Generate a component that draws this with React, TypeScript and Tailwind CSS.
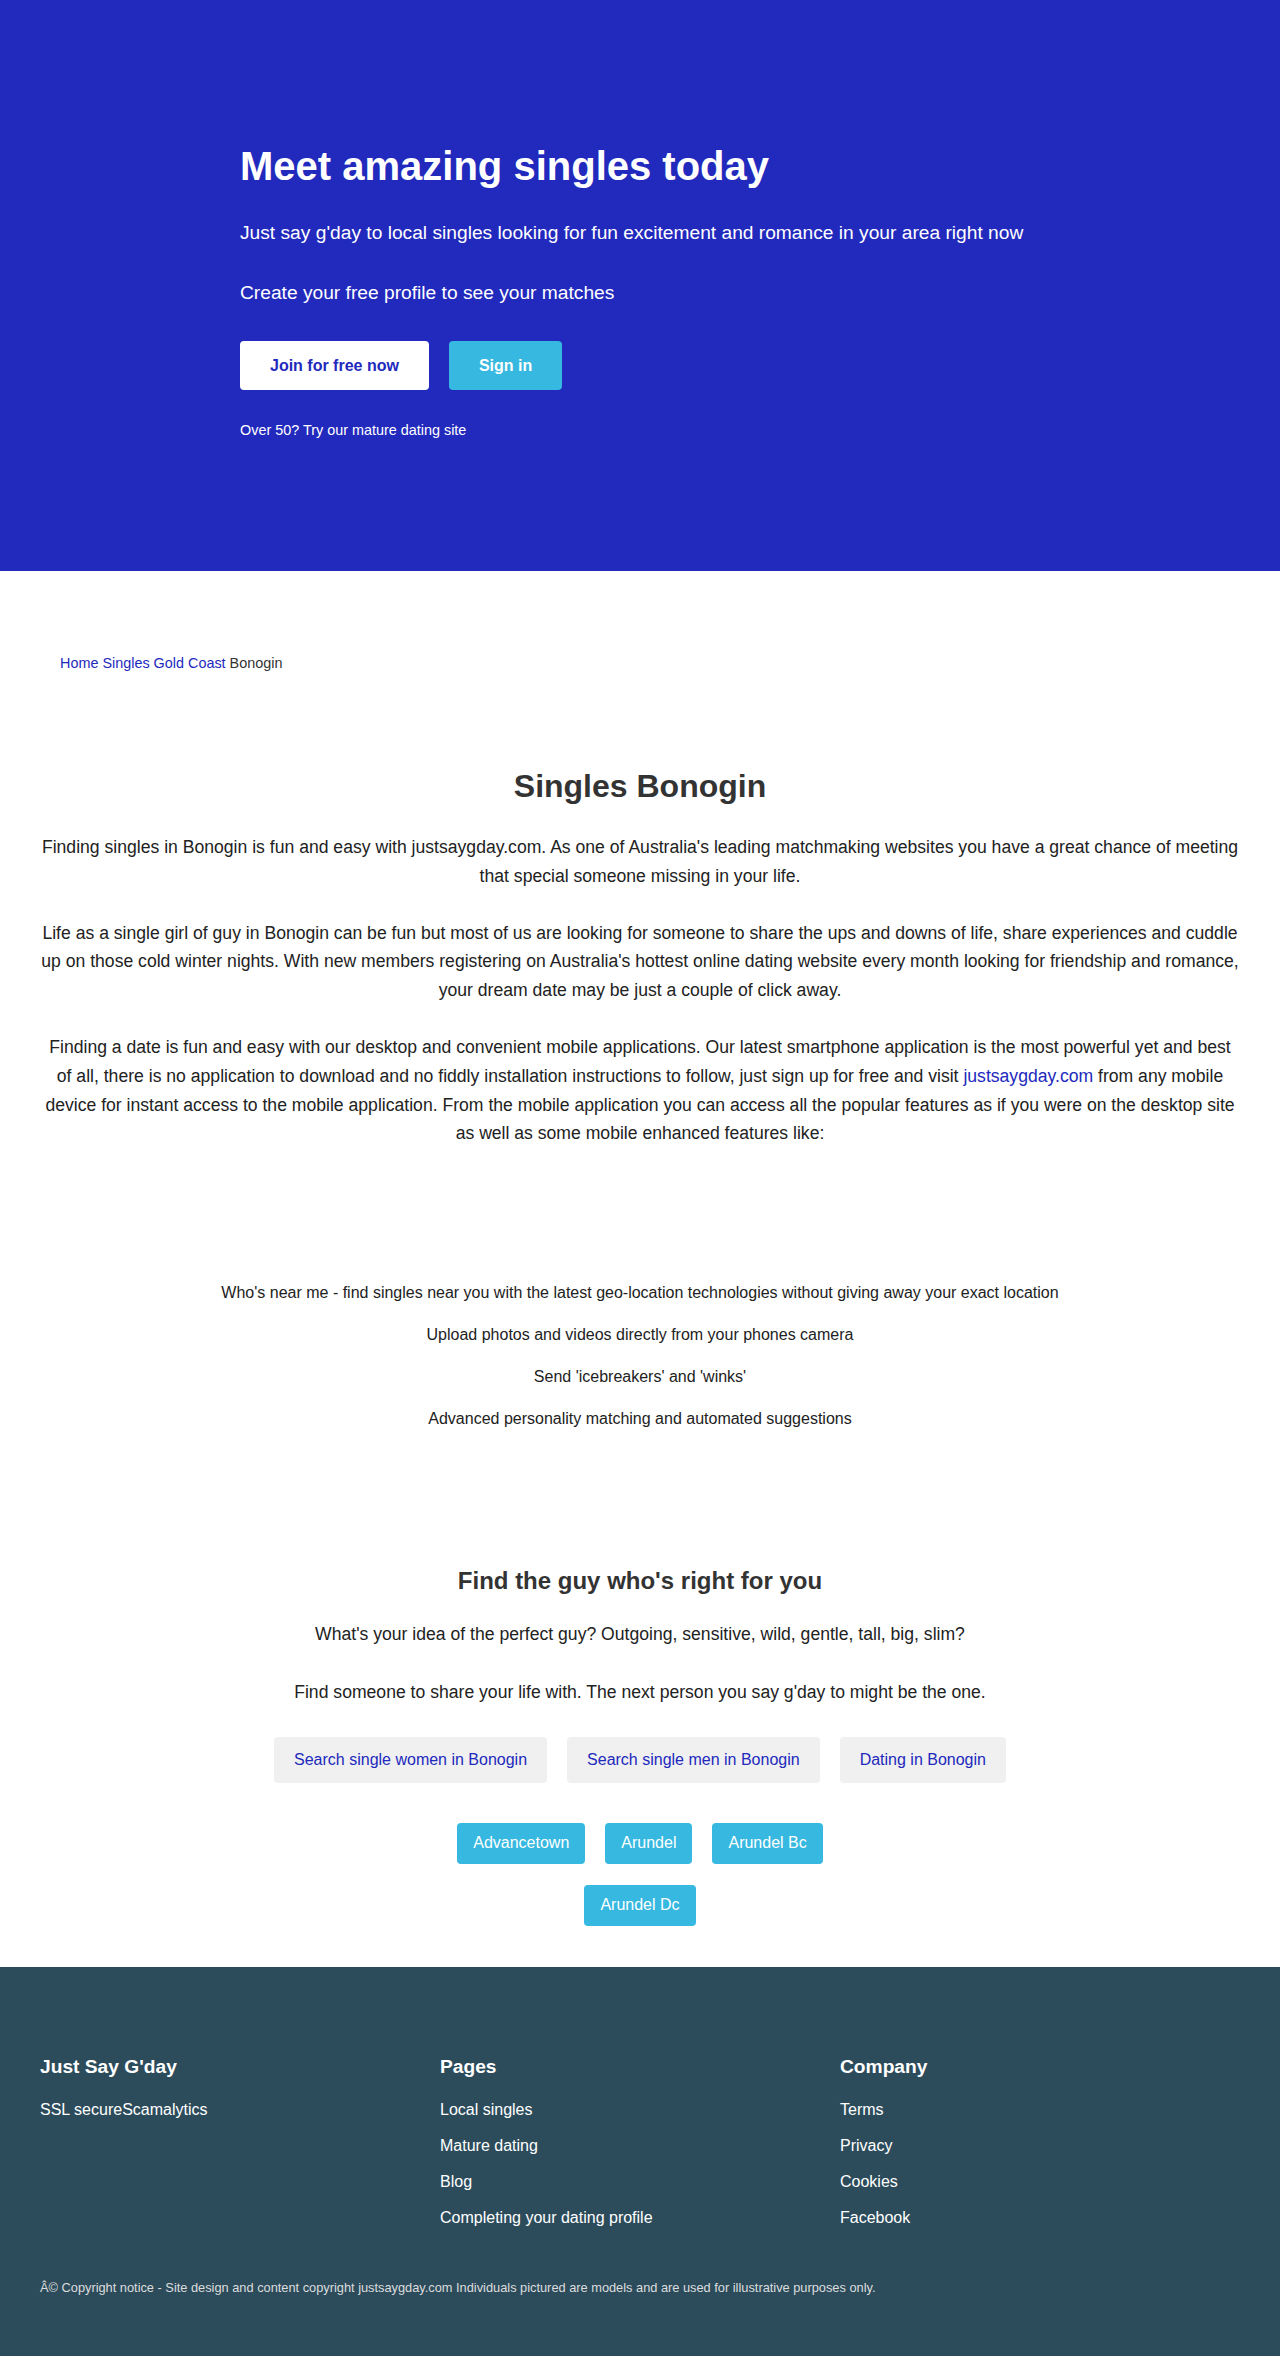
import React from "react";

const font = { fontFamily: '"Liberation Sans", Arial, Helvetica, sans-serif' };

export default function App() {
  const features = [
    "Who's near me - find singles near you with the latest geo-location technologies without giving away your exact location",
    "Upload photos and videos directly from your phones camera",
    "Send 'icebreakers' and 'winks'",
    "Advanced personality matching and automated suggestions",
  ];
  const towns = ["Advancetown", "Arundel", "Arundel Bc", "Arundel Dc"];
  return (
    <div style={font} className="w-[1280px] bg-white text-[#222]">
      {/* Hero */}
      <section className="h-[571px] bg-[#2229bd] text-white pt-[143px]">
        <div className="max-w-[800px] mx-auto">
          <h1 className="text-[40px] leading-[46px] font-bold">Meet amazing singles today</h1>
          <p className="mt-[30px] text-[19.2px] leading-[28px]">
            Just say g'day to local singles looking for fun excitement and romance in your area right now
          </p>
          <p className="mt-[32px] text-[19.2px] leading-[28px]">Create your free profile to see your matches</p>
          <div className="mt-[34px] flex gap-5">
            <a className="h-[49px] px-[30px] flex items-center rounded-[4px] bg-white text-[#2229bd] text-[16px] font-bold">
              Join for free now
            </a>
            <a className="h-[49px] px-[30px] flex items-center rounded-[4px] bg-[#36b8e0] text-white text-[16px] font-bold">
              Sign in
            </a>
          </div>
          <p className="mt-[30px] text-[14.4px] leading-[20px]">Over 50? Try our mature dating site</p>
        </div>
      </section>

      {/* Breadcrumb */}
      <nav className="px-[60px] pt-[80px] text-[14.4px] leading-[24px]">
        <a className="text-[#2229bd]">Home</a> <a className="text-[#2229bd]">Singles</a>{" "}
        <a className="text-[#2229bd]">Gold Coast</a> <span className="text-[#333]">Bonogin</span>
      </nav>

      {/* Intro */}
      <section className="px-10 pt-[92px] text-center">
        <h2 className="text-[32px] leading-[38px] font-bold text-[#333]">Singles Bonogin</h2>
        <div className="mt-[28px] flex flex-col gap-[28px] text-[17.6px] leading-[28.8px]">
          <p>
            Finding singles in Bonogin is fun and easy with justsaygday.com. As one of Australia's leading matchmaking
            websites you have a great chance of meeting that special someone missing in your life.
          </p>
          <p>
            Life as a single girl of guy in Bonogin can be fun but most of us are looking for someone to share the ups and
            downs of life, share experiences and cuddle up on those cold winter nights. With new members registering on
            Australia's hottest online dating website every month looking for friendship and romance, your dream date may
            be just a couple of click away.
          </p>
          <p>
            Finding a date is fun and easy with our desktop and convenient mobile applications. Our latest smartphone
            application is the most powerful yet and best of all, there is no application to download and no fiddly
            installation instructions to follow, just sign up for free and visit{" "}
            <a className="text-[#2229bd]">justsaygday.com</a> from any mobile device for instant access to the mobile
            application. From the mobile application you can access all the popular features as if you were on the
            desktop site as well as some mobile enhanced features like:
          </p>
        </div>
      </section>

      {/* Features */}
      <section className="px-10 pt-[132px] text-center">
        <ul className="flex flex-col gap-4 text-[16px] leading-[26px]">
          {features.map((f) => (
            <li key={f}>{f}</li>
          ))}
        </ul>
      </section>

      {/* Find the guy */}
      <section className="px-10 pt-[134px] pb-[41px] text-center">
        <h3 className="text-[24px] leading-[29px] font-bold text-[#333]">Find the guy who's right for you</h3>
        <div className="mt-[25px] flex flex-col gap-[29px] text-[17.6px] leading-[28.8px]">
          <p>What's your idea of the perfect guy? Outgoing, sensitive, wild, gentle, tall, big, slim?</p>
          <p>Find someone to share your life with. The next person you say g'day to might be the one.</p>
        </div>
        <div className="mt-[30px] flex justify-center gap-5">
          {["Search single women in Bonogin", "Search single men in Bonogin", "Dating in Bonogin"].map((t) => (
            <a
              key={t}
              className="h-[46px] px-5 flex items-center rounded-[4px] bg-[#f0f0f0] text-[#2229bd] text-[16px]"
            >
              {t}
            </a>
          ))}
        </div>
        <div className="mt-[40px] w-[440px] mx-auto flex flex-wrap justify-center gap-x-5 gap-y-[21px]">
          {towns.map((t) => (
            <a
              key={t}
              className="h-[41px] px-4 flex items-center rounded-[4px] bg-[#36b8e0] text-white text-[16px]"
            >
              {t}
            </a>
          ))}
        </div>
      </section>

      {/* Footer */}
      <footer className="bg-[#2c4c5c] text-white px-10 pt-[88px] pb-[60px]">
        <div className="grid grid-cols-3">
          <div>
            <h4 className="text-[19.2px] leading-[24px] font-bold">Just Say G'day</h4>
            <p className="mt-[19px] text-[16px] leading-[24px]">
              <a>SSL secure</a>
              <a>Scamalytics</a>
            </p>
          </div>
          <div>
            <h4 className="text-[19.2px] leading-[24px] font-bold">Pages</h4>
            <ul className="mt-[19px] flex flex-col gap-3 text-[16px] leading-[24px]">
              <li>Local singles</li>
              <li>Mature dating</li>
              <li>Blog</li>
              <li>Completing your dating profile</li>
            </ul>
          </div>
          <div>
            <h4 className="text-[19.2px] leading-[24px] font-bold">Company</h4>
            <ul className="mt-[19px] flex flex-col gap-3 text-[16px] leading-[24px]">
              <li>Terms</li>
              <li>Privacy</li>
              <li>Cookies</li>
              <li>Facebook</li>
            </ul>
          </div>
        </div>
        <p className="mt-[48px] text-[12.8px] leading-[20px] text-[#dddddd]">
          Â© Copyright notice - Site design and content copyright justsaygday.com Individuals pictured are models and are
          used for illustrative purposes only.
        </p>
      </footer>
    </div>
  );
}
